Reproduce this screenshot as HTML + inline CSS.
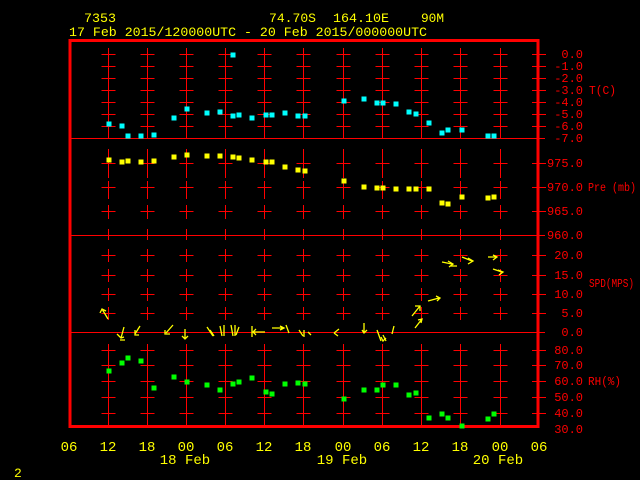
<!DOCTYPE html>
<html><head><style>
html,body{margin:0;padding:0;background:#000;width:640px;height:480px;overflow:hidden}
svg{display:block}
text{font-family:"Liberation Mono",monospace}
</style></head><body>
<svg width="640" height="480" viewBox="0 0 640 480" xmlns="http://www.w3.org/2000/svg">
<rect width="640" height="480" fill="#000"/>
<g fill="#ffff00" font-size="13">
<text x="84" y="22" textLength="32" lengthAdjust="spacingAndGlyphs">7353</text>
<text x="269" y="22" textLength="47" lengthAdjust="spacingAndGlyphs">74.70S</text>
<text x="333" y="22" textLength="56" lengthAdjust="spacingAndGlyphs">164.10E</text>
<text x="421" y="22" textLength="23" lengthAdjust="spacingAndGlyphs">90M</text>
<text x="69" y="36" textLength="358" lengthAdjust="spacingAndGlyphs">17 Feb 2015/120000UTC - 20 Feb 2015/000000UTC</text>
</g>
<g stroke="#ff0000" stroke-width="1" fill="none">
<path d="M108.5 49V138M147.5 49V138M186.5 49V138M225.5 49V138M264.5 49V138M303.5 49V138M343.5 49V138M382.5 49V138M421.5 49V138M460.5 49V138M500.5 49V138"/>
<path d="M108.5 345V427M147.5 345V427M186.5 345V427M225.5 345V427M264.5 345V427M303.5 345V427M343.5 345V427M382.5 345V427M421.5 345V427M460.5 345V427M500.5 345V427"/>
<path stroke-dasharray="16,3,10,6,15,9,11,10" d="M108.5 149V240M147.5 149V240M186.5 149V240M225.5 149V240M264.5 149V240M303.5 149V240M343.5 149V240M382.5 149V240M421.5 149V240M460.5 149V240M500.5 149V240"/>
<path d="M70 138.5H545M70 235.5H545M70 332.5H545"/>
</g>
<g id="crosses" stroke="#ff0000" stroke-width="1"></g>
<rect x="70" y="40.5" width="468" height="386" fill="none" stroke="#ff0000" stroke-width="3"/>
<g fill="#ff0000" font-size="12" text-anchor="end">
<text x="583" y="58">0.0</text><text x="583" y="70">-1.0</text><text x="583" y="82">-2.0</text><text x="583" y="94">-3.0</text><text x="583" y="106">-4.0</text><text x="583" y="118">-5.0</text><text x="583" y="130">-6.0</text><text x="583" y="142">-7.0</text>
<text x="583" y="167">975.0</text><text x="583" y="191">970.0</text><text x="583" y="215">965.0</text><text x="583" y="239">960.0</text>
<text x="583" y="259">20.0</text><text x="583" y="279">15.0</text><text x="583" y="298">10.0</text><text x="583" y="317">5.0</text><text x="583" y="336">0.0</text>
<text x="583" y="354">80.0</text><text x="583" y="369">70.0</text><text x="583" y="385">60.0</text><text x="583" y="401">50.0</text><text x="583" y="417">40.0</text><text x="583" y="433">30.0</text>
</g>
<g fill="#ff0000" font-size="12">
<text x="589" y="94" textLength="27" lengthAdjust="spacingAndGlyphs">T(C)</text>
<text x="588" y="191" textLength="48" lengthAdjust="spacingAndGlyphs">Pre (mb)</text>
<text x="589" y="287" textLength="45" lengthAdjust="spacingAndGlyphs">SPD(MPS)</text>
<text x="588" y="385" textLength="33" lengthAdjust="spacingAndGlyphs">RH(%)</text>
</g>
<g fill="#ffff00" font-size="14" text-anchor="middle">
<text x="69" y="451">06</text><text x="108" y="451">12</text><text x="147" y="451">18</text><text x="186" y="451">00</text><text x="225" y="451">06</text><text x="264" y="451">12</text><text x="303" y="451">18</text><text x="343" y="451">00</text><text x="382" y="451">06</text><text x="421" y="451">12</text><text x="460" y="451">18</text><text x="500" y="451">00</text><text x="539" y="451">06</text>
<text x="185" y="464">18 Feb</text><text x="342" y="464">19 Feb</text><text x="498" y="464">20 Feb</text>
</g>
<text x="14" y="477" fill="#ffff00" font-size="13">2</text>
<g id="pts"></g>
<g stroke="#ffff00" stroke-width="1.3" fill="none">
<path d="M108 319L102 309M100 313L102 309L106 311"/>
<path d="M124 327L121 338M117 334L121 338L124 337M120 340H125"/>
<path d="M140 326L135 334M135 330V335H139"/>
<path d="M173 325L166 333M165 330V334H170"/>
<path d="M185 329V339M182 336L185 339L188 336"/>
<path d="M207 327L213 336M210 330L214 336"/>
<path d="M220 326L222 336M224 325V336"/>
<path d="M231 325L233 336M235 325V336M239 327L236 335"/>
<path d="M252 326V337M253 332H265M256 329L253 332L256 335"/>
<path d="M272 328H283M280 326L284 328L280 330M286 325L289 333"/>
<path d="M299 330L303 336M304 330V337M308 332L311 335"/>
<path d="M334 333L339 329M334 333L338 336"/>
<path d="M364 323V333M362 330L364 333L367 330"/>
<path d="M377 330L381 341M381 337L383 341L386 338"/>
<path d="M383 335L386 341M394 326L392 334"/>
<path d="M412 316L420 306M415 306H420V311"/>
<path d="M415 328L422 319M418 320L422 319L421 323"/>
<path d="M428 301L439 298M436 296L440 298L437 301"/>
<path d="M442 262L452 264M448 261L453 264L449 267M450 266L457 266"/>
<path d="M462 257L472 261M468 258L473 261L468 264"/>
<path d="M488 257L497 257M493 255L497 257L493 260"/>
<path d="M493 269L502 272M498 270L503 272L499 275"/>
</g>
<script>
(function(){
var NS="http://www.w3.org/2000/svg";
var xs=[108.5,147.5,186.5,225.5,264.5,303.5,343.5,382.5,421.5,460.5,500.5,539];
var ysT=[54,66,78,90,102,114,126],ysP=[163,187,211],ysS=[255,275,294,313],ysR=[350,365,381,397,413];
var g=document.getElementById('crosses');var d="";
function cr(x,y){d+="M"+(x-7)+" "+(y+.5)+"H"+(x+7)+"M"+x+" "+(y-6)+"V"+(y+7);}
xs.forEach(function(x){[ysT,ysP,ysS,ysR].forEach(function(a){a.forEach(function(y){cr(x,y);});});});
var p=document.createElementNS(NS,'path');p.setAttribute('d',d);p.setAttribute('fill','none');g.appendChild(p);
var pts=document.getElementById('pts');
function sq(list,c){list.forEach(function(q){var r=document.createElementNS(NS,'rect');r.setAttribute('x',q[0]-2.5);r.setAttribute('y',q[1]-2.5);r.setAttribute('width',5);r.setAttribute('height',5);r.setAttribute('fill',c);pts.appendChild(r);});}
sq([[109,124],[122,126],[128,136],[141,136],[154,135],[174,118],[187,109],[207,113],[220,112],[233,116],[239,115],[252,118],[266,115],[272,115],[285,113],[298,116],[305,116],[233,55],[344,101],[364,99],[377,103],[383,103],[396,104],[409,112],[416,114],[429,123],[442,133],[448,130],[462,130],[488,136],[494,136]],'#00ffff');
sq([[109,160],[122,162],[128,161],[141,162],[154,161],[174,157],[187,155],[207,156],[220,156],[233,157],[239,158],[252,160],[266,162],[272,162],[285,167],[298,170],[305,171],[344,181],[364,187],[377,188],[383,188],[396,189],[409,189],[416,189],[429,189],[442,203],[448,204],[462,197],[488,198],[494,197]],'#ffff00');
sq([[109,371],[122,363],[128,358],[141,361],[154,388],[174,377],[187,382],[207,385],[220,390],[233,384],[239,382],[252,378],[266,392],[272,394],[285,384],[298,383],[305,384],[344,399],[364,390],[377,390],[383,385],[396,385],[409,395],[416,393],[429,418],[442,414],[448,418],[462,426],[488,419],[494,414]],'#00ff00');
})();
</script>
</svg>
</body></html>
